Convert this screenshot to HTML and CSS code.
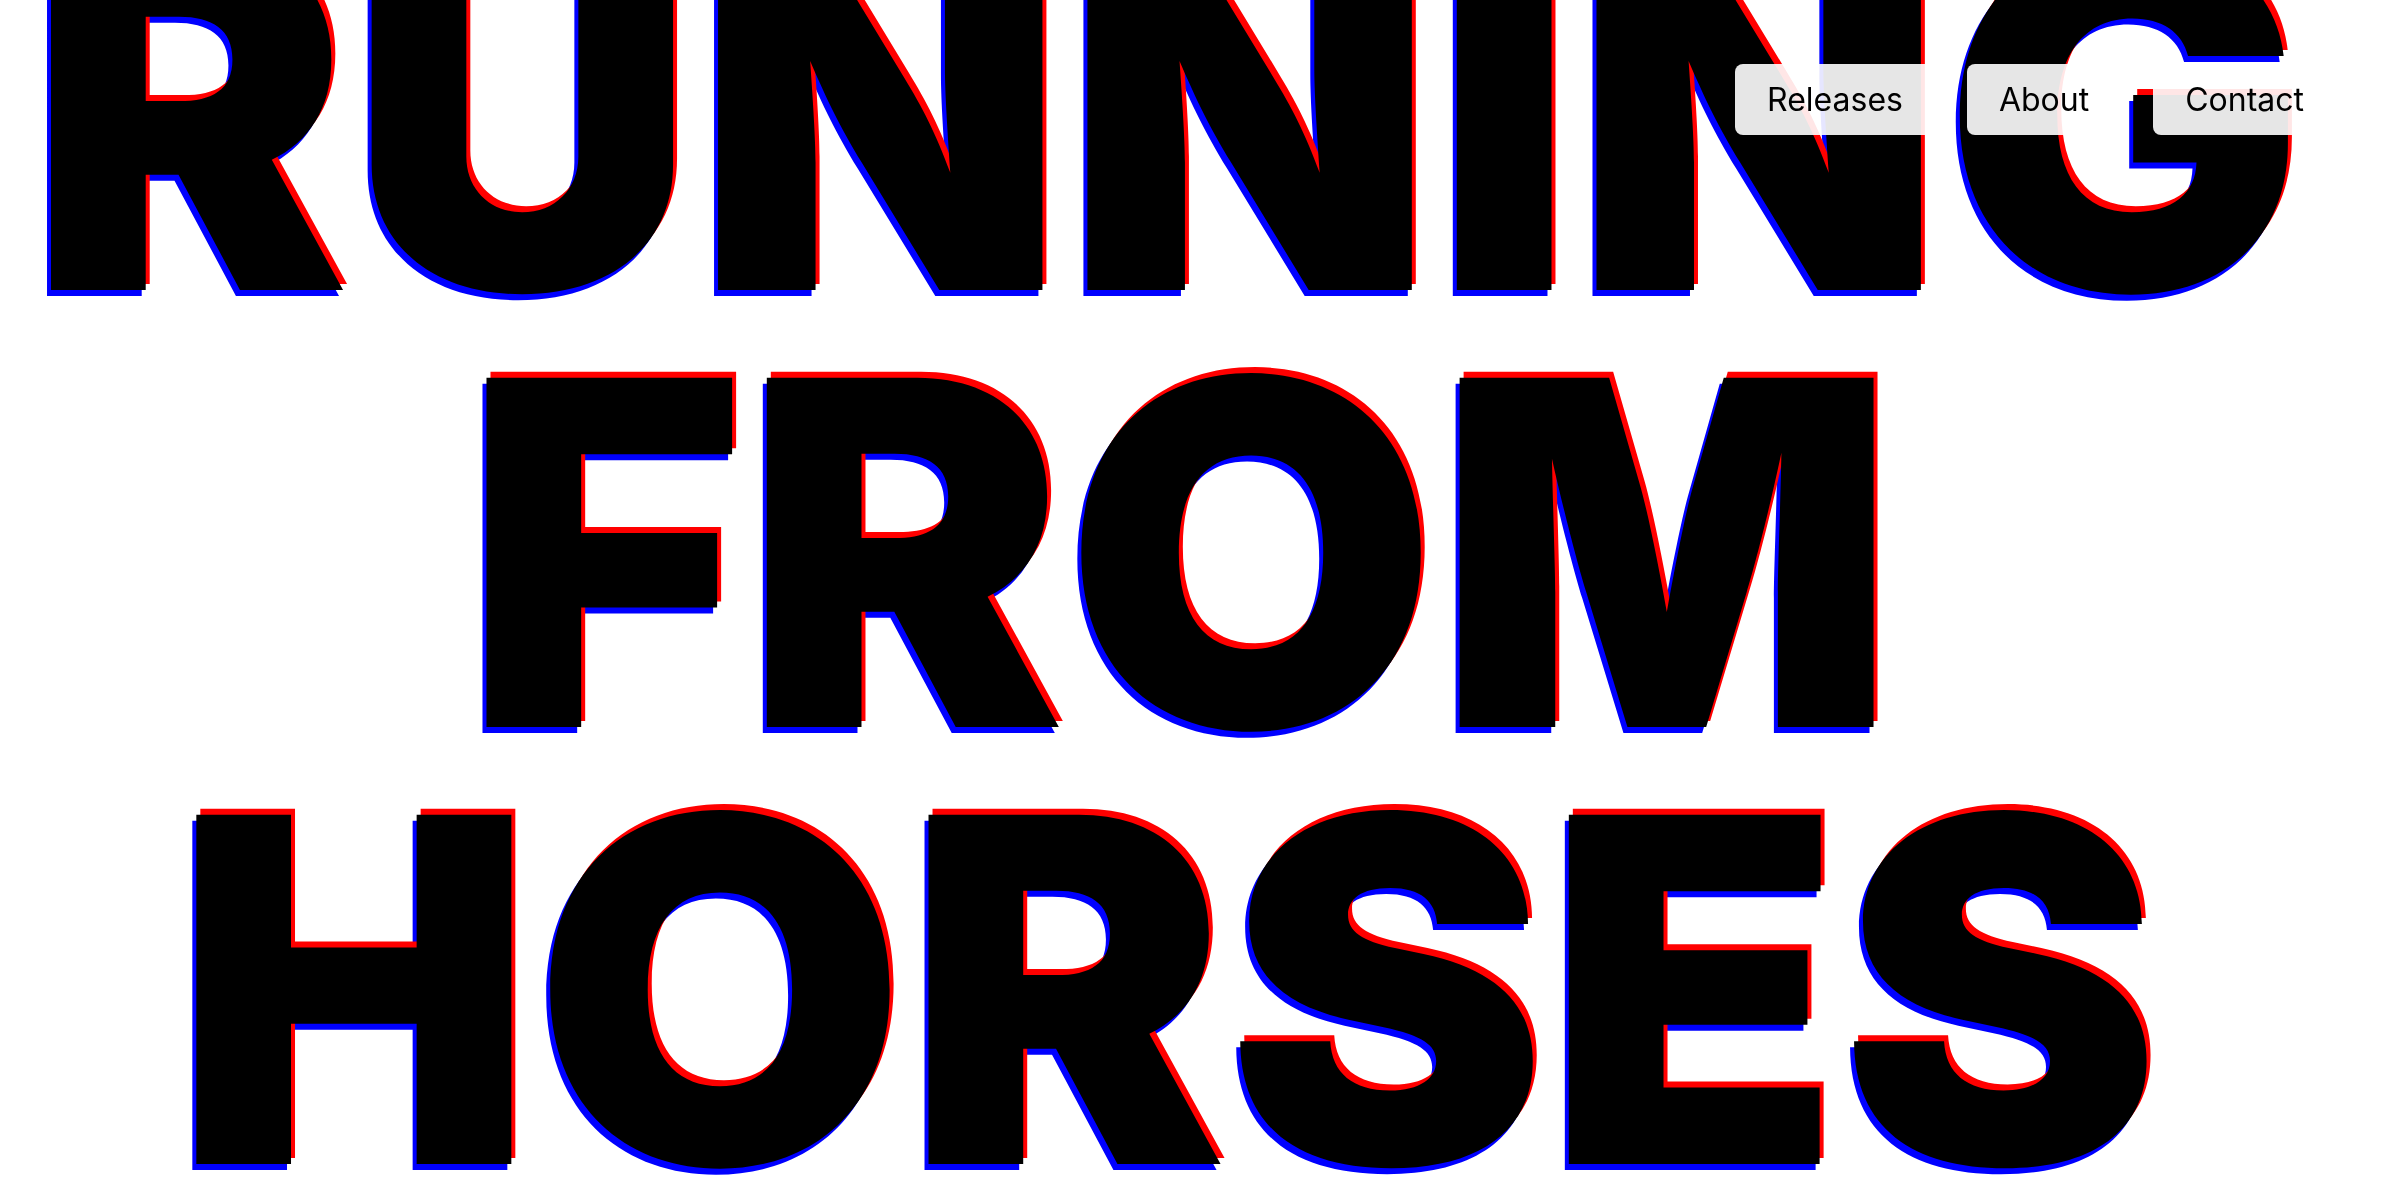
FILE: index.html
```html
<!DOCTYPE html>
<html lang="en">
<head>
    <meta charset="UTF-8">
    <meta name="viewport" content="width=device-width, initial-scale=1.0">
    <title>Running From Horses</title>
    <link rel="stylesheet" href="styles.css">
</head>
<body>
    <nav class="nav">
        <a href="#releases">Releases</a>
        <a href="#about">About</a>
        <a href="#contact">Contact</a>
    </nav>

    <h1 class="title">RUNNING <span class="title-mid">FROM</span> HORSES</h1>
</body>
</html>
```

FILE: styles.css
```css
body {
    margin: 0;
    font-family: Inter, "Noto Sans", sans-serif;
    background-color: #fff;
    color: #000;
    overflow: hidden;
}
.title {
    margin: -102px 0 0;
    padding-right: 66px;
    font-size: 480px;
    font-weight: 900;
    line-height: 0.91;
    text-align: center;
    text-shadow: 4px -6px 0 #f00, -4px 6px 0 #00f;
}
.title-mid {
    padding-left: 26px;
}
.nav {
    position: fixed;
    top: 64px;
    right: 64px;
    display: flex;
    gap: 32px;
    z-index: 1;
}
.nav a {
    padding: 16px 32px;
    font-size: 32px;
    color: #000;
    text-decoration: none;
    background-color: rgba(255, 255, 255, 0.9);
    border-radius: 8px;
}
```
